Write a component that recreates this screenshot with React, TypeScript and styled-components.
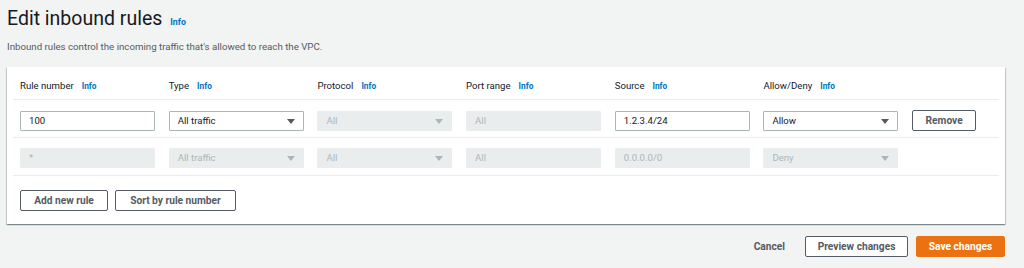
import * as React from 'react'
import styled, { createGlobalStyle } from 'styled-components'

const GlobalStyle = createGlobalStyle`
  html, body {
    margin: 0;
    padding: 0;
    background: #f2f3f3;
    font-family: Roboto, "Liberation Sans", Arial, sans-serif;
    color: #16191f;
  }
`

const Page = styled.div`
  width: 1024px;
  height: 268px;
  box-sizing: border-box;
  padding: 6px 19px 0 7px;
`

const Title = styled.h1`
  margin: 0;
  display: flex;
  align-items: baseline;
  gap: 8px;
  font-size: 19.5px;
  font-weight: 400;
  line-height: 26px;
  color: #16191f;
`

const Info = styled.a<{ $size?: number }>`
  font-size: ${p => p.$size ?? 8.3}px;
  font-weight: 700;
  color: #0073bb;
  text-decoration: none;
`

const Subtitle = styled.p`
  margin: 5px 0 0;
  font-size: 9.7px;
  line-height: 14px;
  color: #545b64;
`

const Panel = styled.section`
  margin-top: 13px;
  background: #fff;
  box-shadow: 0 1px 1px 0 rgba(0, 28, 36, 0.3), 1px 1px 1px 0 rgba(0, 28, 36, 0.15),
    -1px 1px 1px 0 rgba(0, 28, 36, 0.15);
  padding: 0 6px;
`

const Row = styled.div<{ $head?: boolean }>`
  display: grid;
  grid-template-columns: repeat(6, 135px) auto;
  column-gap: 13.7px;
  align-items: center;
  align-content: start;
  padding: ${p => (p.$head ? '12px 7px 0' : '10px 7px 0')};
  height: ${p => (p.$head ? '33px' : '38px')};
  box-sizing: border-box;
  border-bottom: 1px solid #eaeded;
`

const Label = styled.div`
  display: flex;
  align-items: baseline;
  gap: 8px;
  font-size: 9.6px;
  color: #16191f;
  line-height: 14px;
`

const Field = styled.div<{ $disabled?: boolean }>`
  position: relative;
  height: 20px;
  box-sizing: border-box;
  border: 1px solid ${p => (p.$disabled ? '#eaeded' : '#aab7b8')};
  background: ${p => (p.$disabled ? '#eaeded' : '#fff')};
  color: ${p => (p.$disabled ? '#aab7b8' : '#16191f')};
  font-size: 9.6px;
  line-height: 18px;
  padding: 0 8px;
  border-radius: 1px;
`

const Caret = styled.span<{ $disabled?: boolean }>`
  position: absolute;
  right: 8px;
  top: 7px;
  width: 0;
  height: 0;
  border-left: 4px solid transparent;
  border-right: 4px solid transparent;
  border-top: 5px solid ${p => (p.$disabled ? '#aab7b8' : '#545b64')};
`

const Button = styled.button<{ $primary?: boolean; $width?: number }>`
  height: 21px;
  box-sizing: border-box;
  width: ${p => (p.$width ? `${p.$width}px` : 'auto')};
  padding: 0;
  border: 1px solid ${p => (p.$primary ? '#ec7211' : '#545b64')};
  background: ${p => (p.$primary ? '#ec7211' : '#fff')};
  color: ${p => (p.$primary ? '#fff' : '#545b64')};
  font-family: inherit;
  font-size: 10.2px;
  font-weight: 700;
  border-radius: 2px;
  cursor: pointer;
`

const LinkButton = styled.button`
  border: none;
  background: none;
  font-family: inherit;
  font-size: 10.2px;
  font-weight: 700;
  color: #545b64;
  padding: 0 12px;
  height: 21px;
`

const PanelFooter = styled.div`
  display: flex;
  gap: 7px;
  padding: 14px 7px 13px;
`

const Actions = styled.div`
  display: flex;
  justify-content: flex-end;
  align-items: center;
  gap: 8px;
  margin-top: 12px;
`

const headers = ['Rule number', 'Type', 'Protocol', 'Port range', 'Source', 'Allow/Deny']

type Cell = { text: string; select?: boolean; disabled?: boolean }

const rows: Cell[][] = [
  [
    { text: '100' },
    { text: 'All traffic', select: true },
    { text: 'All', select: true, disabled: true },
    { text: 'All', disabled: true },
    { text: '1.2.3.4/24' },
    { text: 'Allow', select: true },
  ],
  [
    { text: '*', disabled: true },
    { text: 'All traffic', select: true, disabled: true },
    { text: 'All', select: true, disabled: true },
    { text: 'All', disabled: true },
    { text: '0.0.0.0/0', disabled: true },
    { text: 'Deny', select: true, disabled: true },
  ],
]

export default function App() {
  return (
    <>
      <GlobalStyle />
      <Page>
        <Title>
          Edit inbound rules <Info $size={8.8}>Info</Info>
        </Title>
        <Subtitle>Inbound rules control the incoming traffic that's allowed to reach the VPC.</Subtitle>
        <Panel>
          <Row $head>
            {headers.map(h => (
              <Label key={h}>
                {h} <Info>Info</Info>
              </Label>
            ))}
          </Row>
          {rows.map((row, i) => (
            <Row key={i}>
              {row.map((c, j) => (
                <Field key={j} $disabled={c.disabled}>
                  {c.text}
                  {c.select && <Caret $disabled={c.disabled} />}
                </Field>
              ))}
              {i === 0 ? <Button $width={64}>Remove</Button> : <span />}
            </Row>
          ))}
          <PanelFooter>
            <Button $width={88}>Add new rule</Button>
            <Button $width={121}>Sort by rule number</Button>
          </PanelFooter>
        </Panel>
        <Actions>
          <LinkButton>Cancel</LinkButton>
          <Button $width={103}>Preview changes</Button>
          <Button $primary $width={89}>Save changes</Button>
        </Actions>
      </Page>
    </>
  )
}
